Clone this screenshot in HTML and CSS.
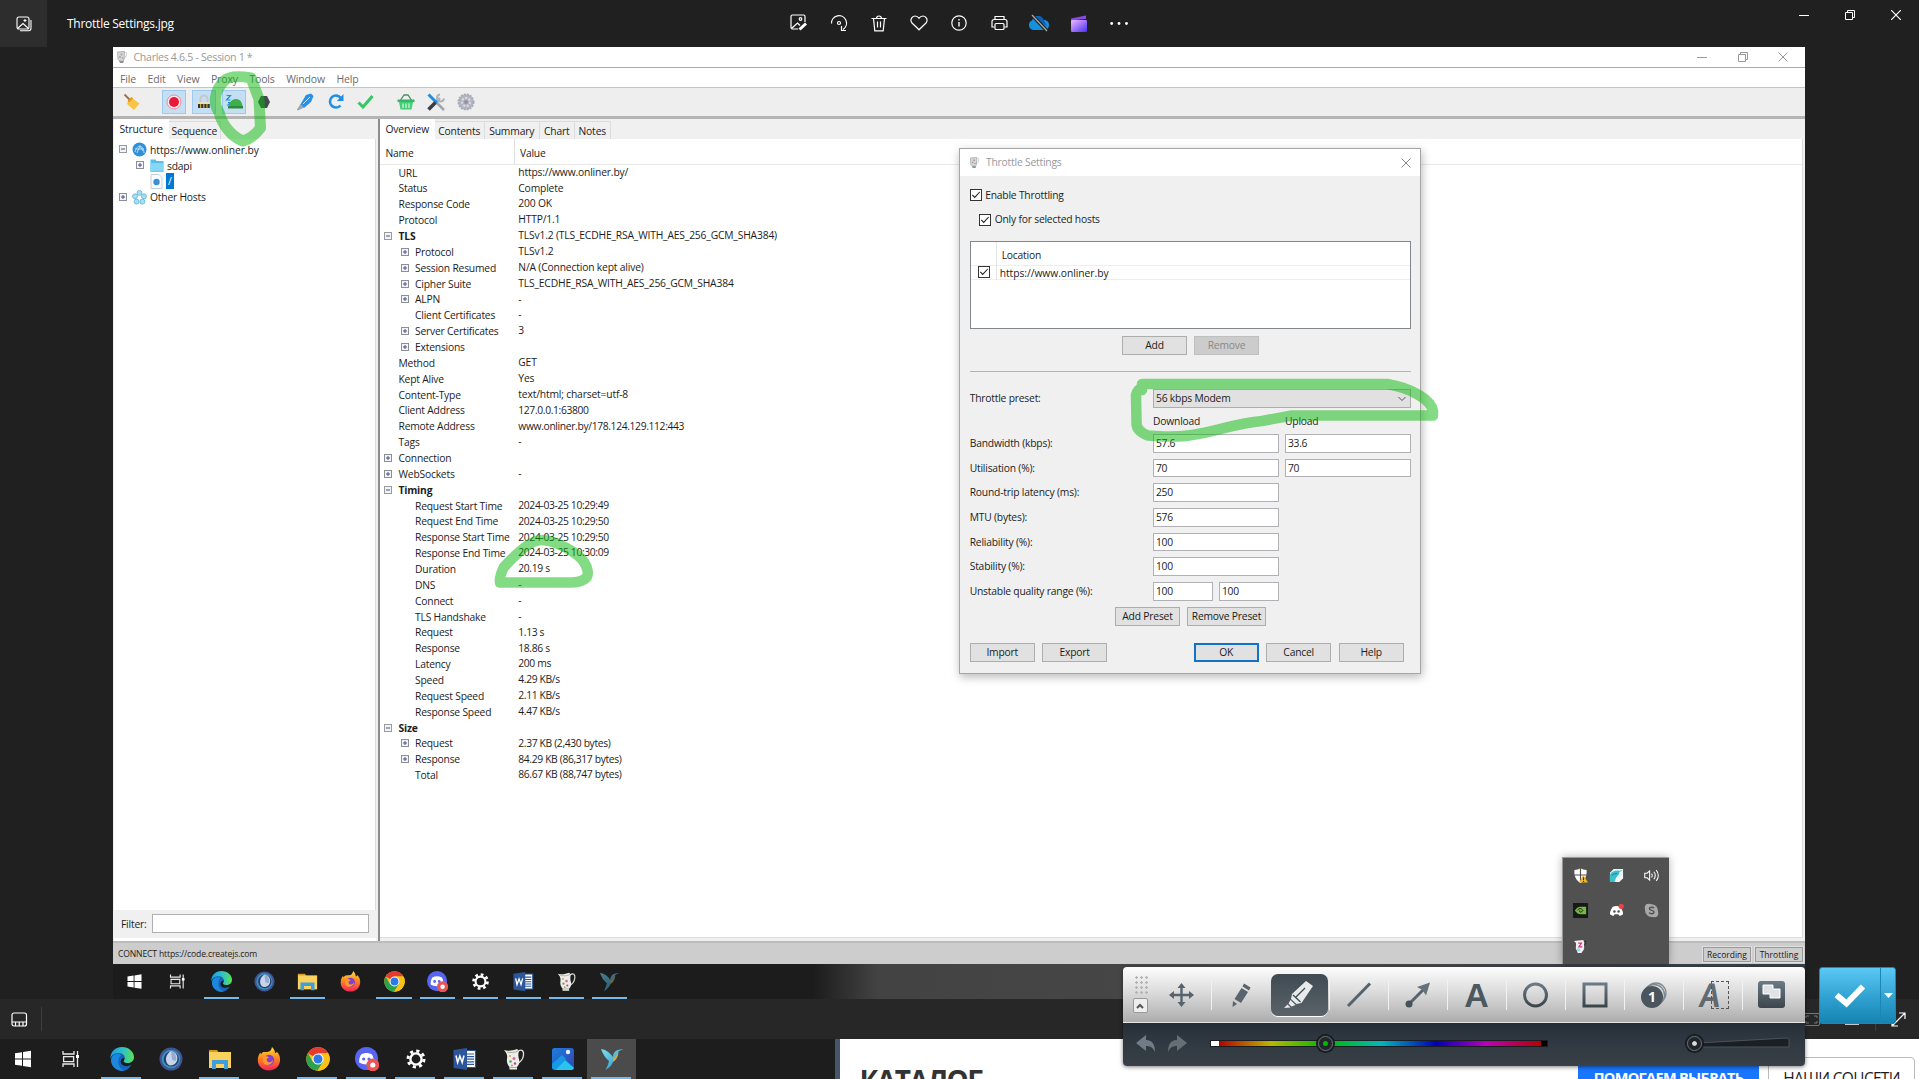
FILE: index.html
```html
<!DOCTYPE html>
<html lang="en">
<head>
<meta charset="utf-8">
<title>Throttle Settings.jpg</title>
<link rel="stylesheet" href="styles.css">
</head>
<body>
<svg class="defs" width="0" height="0" aria-hidden="true">
  <defs>
    <linearGradient id="gEdge" x1="0" y1="0" x2="1" y2="0"><stop offset="0" stop-color="#1b9de2"/><stop offset=".55" stop-color="#2fc2c8"/><stop offset="1" stop-color="#5fe04f"/></linearGradient>
    <linearGradient id="gFox" x1="0" y1="0" x2="0" y2="1"><stop offset="0" stop-color="#ffe03a"/><stop offset=".45" stop-color="#ff8a1e"/><stop offset="1" stop-color="#f5225a"/></linearGradient>
    <linearGradient id="gSteel" x1="0" y1="0" x2="0" y2="1"><stop offset="0" stop-color="#6b7a84"/><stop offset="1" stop-color="#3b454c"/></linearGradient>
    <linearGradient id="gClip" x1="0" y1="0" x2="1" y2="1"><stop offset="0" stop-color="#f0b8ff"/><stop offset="1" stop-color="#4a2ff0"/></linearGradient>
    <linearGradient id="gPhoto" x1="0" y1="0" x2="1" y2="1"><stop offset="0" stop-color="#1a7fe0"/><stop offset="1" stop-color="#3a3fa8"/></linearGradient>
    <linearGradient id="gBird" x1="0" y1="0" x2="1" y2="1"><stop offset="0" stop-color="#7fe3f0"/><stop offset="1" stop-color="#2388c8"/></linearGradient>
  </defs>
  <symbol id="plus" viewBox="0 0 8 8"><rect x=".5" y=".5" width="7" height="7" fill="#f4f4f4" stroke="#8e8e8e"/><path d="M2 4h4M4 2v4" stroke="#3a55a0"/></symbol>
  <symbol id="minus" viewBox="0 0 8 8"><rect x=".5" y=".5" width="7" height="7" fill="#f4f4f4" stroke="#9a9a9a"/><path d="M2 4h4" stroke="#3a55a0"/></symbol>
  <symbol id="check" viewBox="0 0 12 12"><rect x=".5" y=".5" width="11" height="11" fill="#fff" stroke="#333"/><path d="M2.3 5.8l2.4 2.6 5-5.4" fill="none" stroke="#222" stroke-width="1.1"/></symbol>
  <symbol id="win" viewBox="0 0 24 24"><path fill="#fff" d="M4 6.2l7-1v6.3H4zM12 5l8-1.200v7.700h-8zM4 12.500h7v6.300l-7-1zM12 12.500h8v7.700L12 19z"/></symbol>
  <symbol id="tview" viewBox="0 0 24 24"><path fill="none" stroke="#e8e8e8" stroke-width="1.300" d="M4 4v3h11V4M4 20v-3h11v3M4.600 9.600h10v5h-10zM18.500 4v16"/><path fill="#fff" d="M17 8h3v3h-3z"/></symbol>
  <symbol id="edge" viewBox="0 0 24 24"><path fill="#1465c0" d="M1 12c1-5 5-7 9-6 3 1 4 3 4 5-4 0-5 7 1 8 3 .5 5-.5 6.500-1.500C19 22 16 24 12 24 6 24 1 19 1 12z"/><path fill="url(#gEdge)" d="M.3 12C0 5 5 0 12 0c7 0 12 5 12 10 0 4-3 6-6.500 6-3 0-4.500-1-3.500-2.500C16 10 13 6 8.500 6 4.500 6 1 8.500.3 12z"/><path fill="#1d87dd" d="M8.500 13c-1 5 2 9 6 10.500-9 1.500-15-6-13-12.500C3 7 8 6 11 8c-1.500 1-2.300 3-2.500 5z"/></symbol>
  <symbol id="bird1" viewBox="0 0 24 24"><circle cx="12" cy="12" r="11.500" fill="#3f5590"/><circle cx="12" cy="12" r="9.300" fill="#3a8fc0"/><circle cx="12.300" cy="12" r="7.600" fill="#23406f"/><path fill="#c8d4ea" d="M12 4c5 1 7.500 5 6 10-1.500 4-6 5.500-9 3.500C5.500 14 6.500 7 12 4z"/><path fill="#96aad2" d="M12 4l1 9 4 1c1-5-1-9-5-10z"/></symbol>
  <symbol id="folder" viewBox="0 0 24 24"><path fill="#d99a1c" d="M1 3h8l2 3H1z"/><path fill="#fad15c" d="M1 5h22v16H1z"/><path fill="#3f9fdc" d="M4 13h16v9h-4v-5H8v5H4z"/></symbol>
  <symbol id="firefox" viewBox="0 0 24 24"><path fill="url(#gFox)" d="M15 0c2 2 3 4 3 6 1 0 1.500-.5 1.500-1.500 3 2.500 4 6 3.500 9.500-.8 6-5.500 9.500-11 9.500C5.500 23.500.8 19 .8 13c0-3 1-5.500 2.700-7.500l.5 2C5 5.500 6 5 7 5c2 0 5 0 6-1 1-1 1.500-2 2-4z"/><circle cx="12" cy="13" r="5.200" fill="#8340d0"/><path fill="#ff9a28" d="M6 10c2-2 5-1 6 1-2 0-3 1-2 3s4 2 6-1c0 5-8 7-10 2z"/></symbol>
  <symbol id="chrome" viewBox="0 0 24 24"><circle cx="12" cy="12" r="11.700" fill="#fbc116"/><path fill="#e33b2e" d="M12 12L1.900 6.200A11.700 11.700 0 0 1 22.200 6.200H12z"/><path fill="#2ba24c" d="M12 12l-1.500 11.600A11.700 11.700 0 0 1 1.900 6.200L7 15z"/><path fill="#2ba24c" d="M7 15l10 0-5.500 8.700z"/><path fill="#fbc116" d="M12 6.200h10.200a11.700 11.700 0 0 1-10.700 17.500L17 15z"/><circle cx="12" cy="12" r="5.600" fill="#fff"/><circle cx="12" cy="12" r="4.500" fill="#2f78e8"/></symbol>
  <symbol id="discord" viewBox="0 0 24 24"><circle cx="11.500" cy="11.500" r="11.500" fill="#5865f2"/><path fill="#fff" d="M6 7.500c4-2 7-2 11 0 1.500 3 2 5 1.800 8-4 2.500-10.500 2.500-14.600 0C4 12.500 4.500 10 6 7.500z"/><circle cx="8.700" cy="12" r="1.600" fill="#5865f2"/><circle cx="14" cy="12" r="1.600" fill="#5865f2"/><circle cx="17.800" cy="18" r="6.400" fill="#ea5455"/><circle cx="17.800" cy="18" r="2.600" fill="#fff"/></symbol>
  <symbol id="gear" viewBox="0 0 24 24"><circle cx="12" cy="12" r="5.600" fill="none" stroke="#fff" stroke-width="2.400"/><circle cx="12" cy="12" r="8" fill="none" stroke="#fff" stroke-width="3" stroke-dasharray="3.140 3.140"/></symbol>
  <symbol id="word" viewBox="0 0 24 24"><path fill="#fff" stroke="#2b579a" stroke-width="1.200" d="M12 3.500h10.500v17H12z"/><path stroke="#2b579a" stroke-width="1.200" d="M13 7h8M13 9.600h8M13 12.200h8M13 14.800h8M13 17.400h8"/><path fill="#2b579a" d="M.5 3L14 1v22L.5 21z"/><path fill="none" stroke="#fff" stroke-width="1.500" d="M3 8.500l1.600 7L6.900 9l2.300 6.500 1.800-7"/></symbol>
  <symbol id="jug" viewBox="0 0 24 24"><path fill="none" stroke="#d8dcd4" stroke-width="1.400" d="M16 4.500c4-3 6-.5 5.500 3.500-.5 4-3 7-6 8.500"/><path fill="#eceee8" d="M2 3c4 1.500 9 .5 13-1l2 2c-1 3-.8 6 .2 9 .8 3-.7 5.500-2.200 7v2.500H7.500V20C5.500 18 4.500 15 5 12c.4-3 .5-5-3-9z"/><path stroke="#a8ada4" d="M5 5c4 1 8 .5 11-1M7.500 20.500H15" fill="none"/><circle cx="8" cy="9" r="1" fill="#c8a040"/><circle cx="12" cy="11.500" r="1.500" fill="#e06aa0"/><circle cx="8.500" cy="14.500" r="1.300" fill="#4aa870"/><circle cx="13" cy="16.500" r="1.200" fill="#b04aa0"/><circle cx="10" cy="18.500" r="1" fill="#e09040"/></symbol>
  <symbol id="jugsmall" viewBox="0 0 12 14"><path fill="none" stroke="#c4c8c8" d="M8 3.500c2-2 3-1 2.500 1S9 8 8 8.500"/><path fill="#d4d8d8" stroke="#a4a8a8" stroke-width=".8" d="M1.500 2l7-.5L8 10l-1 1H3.500L2 9.500z"/><path fill="#8e9292" d="M3 11h5l-1 2H4z"/><circle cx="5.500" cy="4.500" r="1" fill="#d88a94"/><circle cx="4" cy="7" r=".9" fill="#80b09a"/><circle cx="6.500" cy="8" r=".8" fill="#c08a9c"/></symbol>
  <symbol id="photos" viewBox="0 0 24 24"><rect x="1" y="1" width="22" height="22" rx="2.500" fill="url(#gPhoto)"/><path fill="#1767c0" d="M1 18L11 8l12 12v2l-2 1H3l-2-2z"/><path fill="#27c4f0" d="M4 23l10-10 9 8-2 2z"/><path fill="#169ae8" d="M1 17l10-9 4 4L4 23l-3-2z"/><circle cx="17" cy="5" r="2.200" fill="#e8f0ff"/></symbol>
  <symbol id="hummer" viewBox="0 0 24 24"><path fill="url(#gBird)" d="M1 2c6 1 9 4 12 8 0-4 2-6 4.500-7l6-1-5 2.500c0 5-2.500 8-5.500 10.500-1 3-4 6-7.500 8 2-4 3-6 3.500-9C5 11 3 7 1 2z"/><path fill="#e0a83a" d="M12.500 12c3-1.500 4-4 5-7 1 4-1 7.500-4 9.500z"/></symbol>
</svg>

<header class="viewer-top">
  <div class="app-tile"><svg width="16" height="16" viewBox="0 0 16 16" fill="none" stroke="#fff" stroke-width="1.100"><rect x="1" y="1" width="12" height="12" rx="2"/><path d="M2 12l5-4.500L12 12M4 14.800h8.500a2.500 2.500 0 0 0 2.500-2.500V4M9 3v3M7.500 4.500h3"/></svg></div>
  <div class="file-name">Throttle Settings.jpg</div>
  <nav class="viewer-tools">
    <span><svg width="18" height="18" viewBox="0 0 18 18" fill="none" stroke="#fff" stroke-width="1.200"><path d="M8 15H2.500A1.500 1.500 0 0 1 1 13.500v-11A1.500 1.500 0 0 1 2.500 1h11A1.500 1.500 0 0 1 15 2.500V8M2 14l5.500-5L10 11.500"/><circle cx="10.500" cy="5" r="1.300"/><path d="M9.500 15.500L16 9.500" stroke-width="3"/></svg></span>
    <span><svg width="18" height="18" viewBox="0 0 18 18" fill="none" stroke="#fff" stroke-width="1.200"><path d="M1.500 9.500A7.500 7.500 0 1 1 13 15.500M11.500 12v4.500H16"/><circle cx="9" cy="9" r="1.500"/></svg></span>
    <span><svg width="16" height="17" viewBox="0 0 16 17" fill="none" stroke="#fff" stroke-width="1.200"><path d="M.5 3.500h15M5.500 3.500a2.500 2.500 0 0 1 5 0M2.500 3.500l1.300 12.400h8.400L13.500 3.500M6.500 6.500v6M9.500 6.500v6"/></svg></span>
    <span><svg width="18" height="16" viewBox="0 0 18 16" fill="none" stroke="#fff" stroke-width="1.200"><path d="M9 14.800L2 8C-.5 5 2 1 5 1c2 0 3.200 1 4 2.300C9.800 2 11 1 13 1c3 0 5.500 4 3 7z"/></svg></span>
    <span><svg width="16" height="16" viewBox="0 0 16 16" fill="none" stroke="#fff" stroke-width="1.200"><circle cx="8" cy="8" r="7.200"/><path d="M8 7v4.500M8 4v1.500" stroke-width="1.400"/></svg></span>
    <span><svg width="17" height="16" viewBox="0 0 17 16" fill="none" stroke="#fff" stroke-width="1.200"><path d="M4 4V1.500h9V4M3.500 12H1V6.500A2 2 0 0 1 3 4.500h11a2 2 0 0 1 2 2V12h-2.500"/><rect x="4" y="8.500" width="9" height="6" rx="1"/></svg></span>
    <span><svg width="22" height="18" viewBox="0 0 22 18"><path fill="#1590df" d="M5 16a5 5 0 0 1-1-9.500C6 1 13 .5 15 6c4-.5 6 2 6 5s-2 5-4 5z"/><path fill="#0f5fb4" d="M8 3c3-2 6-1 7.500 2.500L19 12 6 6z"/><path d="M4 1l15 16" stroke="#202020" stroke-width="3.500"/><path d="M4 1l15 16" stroke="#aaa" stroke-width="1.300"/></svg></span>
    <span><svg width="16" height="17" viewBox="0 0 16 17"><rect y="5" width="16" height="12" rx="1" fill="url(#gClip)"/><path fill="#8a4be0" d="M0 5V3.500L15 .5V4L4 5z"/></svg></span>
    <span><svg width="18" height="4" viewBox="0 0 18 4" fill="#fff"><circle cx="1.700" cy="2.500" r="1.400"/><circle cx="9" cy="2.500" r="1.400"/><circle cx="16.500" cy="2.500" r="1.400"/></svg></span>
  </nav>
  <div class="win-ctl">
    <span><svg width="10" height="10" stroke="#fff"><path d="M0 5.500h10"/></svg></span>
    <span><svg width="10" height="10" fill="none" stroke="#fff"><path d="M.5 2.500h7v7h-7zM2.500 2.500v-2h7v7h-2"/></svg></span>
    <span><svg width="10" height="10" stroke="#fff" stroke-width="1.200"><path d="M0 0l10 10M10 0L0 10"/></svg></span>
  </div>
</header>

<main class="stage">
  <section class="shot">
    <div class="titlebar">
      <svg width="12" height="14"><use href="#jugsmall"/></svg>
      <span class="title">Charles 4.6.5 - Session 1 *</span>
      <div class="ctl">
        <svg width="10" height="10" stroke="#999"><path d="M0 5.500h10"/></svg>
        <svg width="10" height="10" fill="none" stroke="#999"><path d="M.5 2.500h7v7h-7zM2.500 2.500v-2h7v7h-2"/></svg>
        <svg width="10" height="10" stroke="#999"><path d="M.5.5l9 9M9.500.5l-9 9"/></svg>
      </div>
    </div>
    <div class="menubar"><span>File</span><span>Edit</span><span>View</span><span>Proxy</span><span>Tools</span><span>Window</span><span>Help</span></div>
    <div class="toolbar">
      <span class="tb"><svg width="18" height="18" viewBox="0 0 18 18"><path d="M1.500 1.500l5 5" stroke="#a0703c" stroke-width="1.800"/><path fill="#f8c445" d="M5 8l3.500-3.500 8 6L11 17 4 11z"/><path fill="#e0971e" d="M4.500 8L8.500 4l1.500 1.200L6 9.500z"/></svg></span>
      <span class="tb on first"><svg width="16" height="16" viewBox="0 0 16 16"><circle cx="8" cy="8" r="7" fill="#fbe8ea" stroke="#ea8c98"/><circle cx="8" cy="8" r="5" fill="#e8173c"/></svg></span>
      <span class="tb on"><svg width="14" height="16" viewBox="0 0 14 16"><path d="M3.500 9V5a3.500 3.500 0 0 1 7 0v4" fill="none" stroke="#c4c8d0" stroke-width="2"/><path fill="#e8dfc0" d="M1 8h12v2H1z"/><path fill="#caa93a" d="M1 10h12v4H1z"/><path d="M1 12h12" stroke="#333" stroke-width="4" stroke-dasharray="2 1.200"/></svg></span>
      <span class="tb on"><svg width="18" height="16" viewBox="0 0 18 16"><path d="M1.500 1.500h4l-4 4.500h4M3 8.500h2.500L3 11h3" fill="none" stroke="#1b8fe0" stroke-width="1.200"/><path fill="#3fae4d" d="M4 13c0-5 3-8 7-8s6 3 6.500 7z"/><path fill="#2b8a3b" d="M3 12h15v2.500H3z"/></svg></span>
      <span class="tb"><svg width="14" height="14" viewBox="0 0 14 14"><path fill="#454a50" d="M4 1h6l3 6-3 6H4L1 7z"/></svg></span>
      <span class="tb gap1"><svg width="18" height="18" viewBox="0 0 18 18"><path fill="#2492ea" d="M10 2l5-1.500L17.500 3 15 9l-7 6-4-3z"/><path stroke="#cfe4f6" d="M7 11l7-7"/><path fill="#9aa6b4" d="M4.500 11L8 14.500 2 17.500l-1.200-.8z"/></svg></span>
      <span class="tb"><svg width="17" height="17" viewBox="0 0 17 17"><path d="M13.500 12.500a6 6 0 1 1 .3-7.500" fill="none" stroke="#1e90e6" stroke-width="2.600"/><path fill="#1e90e6" d="M16.500 1v7H9.800z"/></svg></span>
      <span class="tb"><svg width="17" height="15" viewBox="0 0 17 15"><path d="M1.500 8.500l4.500 4.500L15.500 2" fill="none" stroke="#35c766" stroke-width="3"/></svg></span>
      <span class="tb gap2"><svg width="18" height="17" viewBox="0 0 18 17"><path d="M3 8l4-6h4l4 6" fill="none" stroke="#4b8f60" stroke-width="1.300"/><path fill="#35b863" d="M.5 6.500h17V9h-17z"/><path fill="#46cf78" d="M2 9h14l-1.500 7.500h-11z"/><path stroke="#f0fff5" d="M6 10.500v4.500M9 10.500v4.500M12 10.500v4.500"/></svg></span>
      <span class="tb"><svg width="18" height="18" viewBox="0 0 18 18"><path d="M9 8.500L13 5" stroke="#b0b4ba" stroke-width="2.500"/><path d="M13 1.500a3.500 3.500 0 1 0 4 4" fill="none" stroke="#b0b4ba" stroke-width="2"/><path d="M10 10l7 7" stroke="#a0a5ac" stroke-width="2.500"/><path d="M1.500 1.500L10 10" stroke="#1e8ee0" stroke-width="3"/><path d="M8.500 9.500L1.500 16.500" stroke="#3a3f45" stroke-width="3.500"/></svg></span>
      <span class="tb"><svg width="18" height="18" viewBox="0 0 18 18"><circle cx="9" cy="9" r="7.500" fill="#b3b6c0" stroke="#a9acb8" stroke-width="2" stroke-dasharray="2 1"/><circle cx="9" cy="9" r="4" fill="none" stroke="#d8dae0" stroke-dasharray="2 1.500" stroke-width="2"/><circle cx="9" cy="9" r="2" fill="#8e93a0"/></svg></span>
    </div>
    <div class="panes">
      <div class="left">
        <div class="tabs"><span class="tab sel">Structure</span><span class="tab">Sequence</span></div>
        <div class="tree">
          <div class="node"><svg class="ex"><use href="#minus"/></svg><svg width="15" height="15" viewBox="0 0 15 15"><circle cx="7.500" cy="7.500" r="7" fill="#2f8fd8"/><path d="M3 10c1-4 3-6 5-6s4 4 4 7M3 7h9M5 11l3-7 3 5" fill="none" stroke="#b8def8"/></svg><b class="url">https://www.onliner.by</b></div>
          <div class="node in"><svg class="ex"><use href="#plus"/></svg><svg width="14" height="13" viewBox="0 0 14 13"><path fill="#54bfea" d="M.5.5h5l1 1.500h7v11H.5z"/><path fill="#85d6f7" d="M.5 4h13v8.500H.5z"/></svg><b>sdapi</b></div>
          <div class="node in"><i class="ex"></i><svg width="13" height="15" viewBox="0 0 13 15"><path fill="#fbfcff" stroke="#c6d0da" d="M1 .5h8l3 3v11H1z"/><circle cx="6.500" cy="8" r="3.200" fill="#3a92d6"/></svg><b class="pick">/</b></div>
          <div class="node"><svg class="ex"><use href="#plus"/></svg><svg width="15" height="15" viewBox="0 0 15 15" fill="#a6def2" stroke="#5fb4d4" stroke-width=".8"><circle cx="7.500" cy="2.900" r="2.500"/><circle cx="12" cy="6.300" r="2.500"/><circle cx="10.400" cy="11.600" r="2.500"/><circle cx="4.600" cy="11.600" r="2.500"/><circle cx="3" cy="6.300" r="2.500"/></svg><b>Other Hosts</b></div>
        </div>
        <div class="filter"><span>Filter:</span><div class="field"></div></div>
      </div>
      <div class="right">
        <div class="tabs"><span class="tab sel">Overview</span><span class="tab">Contents</span><span class="tab">Summary</span><span class="tab">Chart</span><span class="tab">Notes</span></div>
        <div class="table">
          <div class="thead"><span>Name</span><span>Value</span></div>
          <div class="r"><span>URL</span><span>https://www.onliner.by/</span></div>
          <div class="r"><span>Status</span><span>Complete</span></div>
          <div class="r"><span>Response Code</span><span>200 OK</span></div>
          <div class="r"><span>Protocol</span><span>HTTP/1.1</span></div>
          <div class="r g"><svg class="ex"><use href="#minus"/></svg><span>TLS</span><span>TLSv1.2 (TLS_ECDHE_RSA_WITH_AES_256_GCM_SHA384)</span></div>
          <div class="r s"><svg class="ex"><use href="#plus"/></svg><span>Protocol</span><span>TLSv1.2</span></div>
          <div class="r s"><svg class="ex"><use href="#plus"/></svg><span>Session Resumed</span><span>N/A (Connection kept alive)</span></div>
          <div class="r s"><svg class="ex"><use href="#plus"/></svg><span>Cipher Suite</span><span>TLS_ECDHE_RSA_WITH_AES_256_GCM_SHA384</span></div>
          <div class="r s"><svg class="ex"><use href="#plus"/></svg><span>ALPN</span><span>-</span></div>
          <div class="r s"><span>Client Certificates</span><span>-</span></div>
          <div class="r s"><svg class="ex"><use href="#plus"/></svg><span>Server Certificates</span><span>3</span></div>
          <div class="r s"><svg class="ex"><use href="#plus"/></svg><span>Extensions</span><span></span></div>
          <div class="r"><span>Method</span><span>GET</span></div>
          <div class="r"><span>Kept Alive</span><span>Yes</span></div>
          <div class="r"><span>Content-Type</span><span>text/html; charset=utf-8</span></div>
          <div class="r n"><span>Client Address</span><span>127.0.0.1:63800</span></div>
          <div class="r n"><span>Remote Address</span><span>www.onliner.by/178.124.129.112:443</span></div>
          <div class="r"><span>Tags</span><span>-</span></div>
          <div class="r"><svg class="ex"><use href="#plus"/></svg><span>Connection</span><span></span></div>
          <div class="r"><svg class="ex"><use href="#plus"/></svg><span>WebSockets</span><span>-</span></div>
          <div class="r g"><svg class="ex"><use href="#minus"/></svg><span>Timing</span><span></span></div>
          <div class="r s n"><span>Request Start Time</span><span>2024-03-25 10:29:49</span></div>
          <div class="r s n"><span>Request End Time</span><span>2024-03-25 10:29:50</span></div>
          <div class="r s n"><span>Response Start Time</span><span>2024-03-25 10:29:50</span></div>
          <div class="r s n"><span>Response End Time</span><span>2024-03-25 10:30:09</span></div>
          <div class="r s n"><span>Duration</span><span>20.19 s</span></div>
          <div class="r s"><span>DNS</span><span>-</span></div>
          <div class="r s"><span>Connect</span><span>-</span></div>
          <div class="r s"><span>TLS Handshake</span><span>-</span></div>
          <div class="r s n"><span>Request</span><span>1.13 s</span></div>
          <div class="r s n"><span>Response</span><span>18.86 s</span></div>
          <div class="r s n"><span>Latency</span><span>200 ms</span></div>
          <div class="r s n"><span>Speed</span><span>4.29 KB/s</span></div>
          <div class="r s n"><span>Request Speed</span><span>2.11 KB/s</span></div>
          <div class="r s n"><span>Response Speed</span><span>4.47 KB/s</span></div>
          <div class="r g"><svg class="ex"><use href="#minus"/></svg><span>Size</span><span></span></div>
          <div class="r s n"><svg class="ex"><use href="#plus"/></svg><span>Request</span><span>2.37 KB (2,430 bytes)</span></div>
          <div class="r s n"><svg class="ex"><use href="#plus"/></svg><span>Response</span><span>84.29 KB (86,317 bytes)</span></div>
          <div class="r s n"><span>Total</span><span>86.67 KB (88,747 bytes)</span></div>
        </div>
      </div>
    </div>
    <div class="status"><span class="msg">CONNECT https://code.createjs.com</span><span class="badge">Recording</span><span class="badge">Throttling</span></div>
    <div class="taskbar inner">
      <span><svg><use href="#win"/></svg></span><span class="tv"><svg><use href="#tview"/></svg></span>
      <span class="run"><svg><use href="#edge"/></svg></span><span><svg><use href="#bird1"/></svg></span><span class="run"><svg><use href="#folder"/></svg></span><span><svg><use href="#firefox"/></svg></span><span class="run"><svg><use href="#chrome"/></svg></span><span class="run"><svg><use href="#discord"/></svg></span><span class="run"><svg><use href="#gear"/></svg></span><span class="run"><svg><use href="#word"/></svg></span><span class="run"><svg><use href="#jug"/></svg></span><span class="run faded"><svg><use href="#hummer"/></svg></span>
    </div>
  </section>

  <section class="dialog">
    <div class="d-title"><svg width="11" height="13"><use href="#jugsmall"/></svg><span>Throttle Settings</span><svg width="10" height="10" stroke="#888"><path d="M.5.5l9 9M9.500.5l-9 9"/></svg></div>
    <div class="d-body">
      <div class="chk"><svg><use href="#check"/></svg>Enable Throttling</div>
      <div class="chk sub"><svg><use href="#check"/></svg>Only for selected hosts</div>
      <div class="hosts">
        <div class="h-row head"><span></span><span>Location</span></div>
        <div class="h-row"><span><svg><use href="#check"/></svg></span><span class="url">https://www.onliner.by</span></div>
      </div>
      <div class="btns add"><span class="btn">Add</span><span class="btn off">Remove</span></div>
      <div class="rule"></div>
      <div class="form">
        <label>Throttle preset:</label><div class="select">56 kbps Modem<svg width="8" height="6" fill="none" stroke="#555"><path d="M.5 1l3.500 3.500L7.500 1"/></svg></div>
        <label class="cap"></label><span class="cap">Download</span><span class="cap">Upload</span>
        <label>Bandwidth (kbps):</label><span class="inp">57.6</span><span class="inp">33.6</span>
        <label>Utilisation (%):</label><span class="inp">70</span><span class="inp">70</span>
        <label>Round-trip latency (ms):</label><span class="inp">250</span><i></i>
        <label>MTU (bytes):</label><span class="inp">576</span><i></i>
        <label>Reliability (%):</label><span class="inp">100</span><i></i>
        <label>Stability (%):</label><span class="inp">100</span><i></i>
        <label>Unstable quality range (%):</label><div class="pair"><span class="inp">100</span><span class="inp">100</span></div><i></i>
      </div>
      <div class="btns preset"><span class="btn">Add Preset</span><span class="btn wide">Remove Preset</span></div>
      <div class="btns foot"><span class="btn">Import</span><span class="btn">Export</span><span class="btn ok">OK</span><span class="btn">Cancel</span><span class="btn">Help</span></div>
    </div>
  </section>

  <section class="tray">
    <svg viewBox="0 0 16 16"><path fill="#fff" d="M8 0c2 1.500 4 2 6.500 2 .5 7-2 11-6.500 14C3.500 13 1 9 1.500 2 4 2 6 1.500 8 0z"/><path d="M8 0v15M1.500 7.500h13" stroke="#505050" stroke-width="1.200"/><path fill="#f0b422" d="M11 7.500l5 8H6.500z"/><path d="M11.200 10v3M11.200 13.800v1" stroke="#222"/></svg>
    <svg viewBox="0 0 16 16"><path fill="#eef6f6" d="M5 1h10v10l-4 4H1V5z"/><path fill="#3cc0cc" d="M1 7c2-4 7-5 10-4l4-1-4 2.500C11 8 7 9 6 15H1z"/><path d="M3 8c2-2 4-2 6-2" stroke="#157a88" fill="none"/></svg>
    <svg viewBox="0 0 16 16" fill="none" stroke="#fff" stroke-width="1.100"><path d="M.8 5.500h2.500L6 3v10L3.300 10.500H.8zM8 6c1 1 1 3 0 4M10.500 4c2 2.200 2 5.800 0 8M13 2.200c3 3.300 3 8.300 0 11.600"/></svg>
    <svg viewBox="0 0 16 16"><path fill="#161a14" d="M0 0h16v16H0z"/><path fill="#76b947" d="M2 8c2-3 4-4 6-4h6v8H8c-2 0-4-1-6-4z"/><path d="M4.500 8c3-3.500 5-2 6 0-2 3-4 1.500-3.500 0" fill="none" stroke="#161a14"/></svg>
    <svg viewBox="0 0 16 16"><path fill="#fff" d="M4 4c3-1 5-1 8 0 2 3 3 5 3 8-2 1.500-3 1.500-4 1.500l-1-1.500H6l-1 1.500c-1 0-2 0-4-1.500 0-3 1-5 3-8z"/><circle cx="5.800" cy="9" r="1.300" fill="#505050"/><circle cx="10.200" cy="9" r="1.300" fill="#505050"/><circle cx="13" cy="3.500" r="2.800" fill="#ed4245"/></svg>
    <svg viewBox="0 0 16 16"><circle cx="8" cy="8" r="6.800" fill="#a9a9a9"/><circle cx="5" cy="5" r="4.200" fill="#a9a9a9"/><circle cx="11" cy="11" r="4.200" fill="#a9a9a9"/><path d="M10.700 5.500C9.500 4 5.700 4.200 5.700 6.200c0 2.200 5 1.200 5 3.500 0 2.200-4 2.300-5.300.6" fill="none" stroke="#505050" stroke-width="1.500"/></svg>
    <svg viewBox="0 0 16 16"><path fill="#f5f0f2" d="M1 2l10-1 1 3c-1 3 1 6-1 8l-2 3H5l-1-3C2 10 4 7 3 4z"/><path d="M5.500 4.500h3.500L6.200 8.500H10" fill="none" stroke="#d03878" stroke-width="1.300"/><path fill="#8cd8f0" d="M4 10h3l1 3H5z"/><path d="M12 2.500h2L12.500 7" fill="none" stroke="#333"/></svg>
  </section>

  <svg class="ink" width="1919" height="952" viewBox="0 47 1919 952" fill="none" stroke="#08b808" stroke-opacity=".5" stroke-linejoin="round" stroke-linecap="round">
    <path stroke-width="11" d="M224 81C229 76 240 76 251 78L259 99L260.500 128C256 134 250 139 243 141C232 137 222 125 219 112C213 104 214 91 224 81z"/>
    <path stroke-width="10.500" d="M500 582.500C499 577 502 571 504 567C515 555 530 540 541 540C556 540 578 553 584 562C588 568 589 575 586 578C582 582 576 582.500 570 582.500z"/>
    <path stroke-width="10.500" d="M1142 390V384H1387C1412 388 1431 400 1433 411V415.500H1292L1262 421C1236 423 1215 432 1192 435C1175 438 1160 436 1148 435.500C1141 433 1136 429 1136.500 422L1136 395C1137 391 1139 389 1142 388"/>
  </svg>
</main>

<footer class="viewer-bottom">
  <svg width="17" height="15" viewBox="0 0 17 15" fill="none" stroke="#fff" stroke-width="1.200"><rect x="1" y="1" width="14.500" height="13" rx="2"/><path d="M1 10h14.500M4.500 10v4M8.200 10v4M12 10v4"/></svg><i class="vbar"></i>
  <div class="zoomers"><svg width="17" height="13" viewBox="0 0 17 13" fill="none" stroke="#777"><rect x=".5" y=".5" width="16" height="12" rx="1.500"/><path d="M3 5V3h3M11 3h3v2M3 8v2h3M11 10h3V8"/></svg><svg width="16" height="12"><path d="M1 11h14" stroke="#fff" stroke-width="1.500"/></svg><i class="vbar"></i><svg width="15" height="15" fill="none" stroke="#fff" stroke-width="1.200"><path d="M1 14L14 1M8 1h6v6M1 8v6h6"/></svg></div>
</footer>

<div class="bottom">
  <div class="taskbar outer">
    <span><svg><use href="#win"/></svg></span><span class="tv"><svg><use href="#tview"/></svg></span>
    <span class="run"><svg><use href="#edge"/></svg></span><span><svg><use href="#bird1"/></svg></span><span class="run"><svg><use href="#folder"/></svg></span><span><svg><use href="#firefox"/></svg></span><span class="run"><svg><use href="#chrome"/></svg></span><span class="run"><svg><use href="#discord"/></svg></span><span class="run"><svg><use href="#gear"/></svg></span><span class="run"><svg><use href="#word"/></svg></span><span class="run"><svg><use href="#jug"/></svg></span><span class="run"><svg><use href="#photos"/></svg></span><span class="run active"><svg><use href="#hummer"/></svg></span>
  </div>
  <div class="site"><span class="catalog">КАТАЛОГ</span><span class="help">ПОМОГАЕМ ВЫБРАТЬ</span><span class="social">НАШИ СОЦСЕТИ</span></div>
</div>

<section class="editor">
  <div class="e-top">
    <div class="e-grip"><i class="dots"></i><i class="fold"><svg width="8" height="6" fill="none" stroke="#555" stroke-width="2"><path d="M1 5l3-3 3 3"/></svg></i></div>
    <span class="first"><svg width="26" height="26" viewBox="0 0 26 26"><path d="M12.500 4v18M4 13h18" stroke="#56636c" stroke-width="2.400"/><path fill="#56636c" d="M12.500 1l4 5h-8zM12.500 25l4-5h-8zM0 13l5-4v8zM25 13l-5-4v8z"/></svg></span>
    <span><svg width="20" height="26" viewBox="0 0 20 26"><path fill="#58656e" d="M13 1.500l6.500 4-1.500 3-6.500-4zM10.500 6l6.500 4-7 11-6.500-4zM2 19l4 3-4.500 3z"/></svg></span>
    <span class="cur"><svg width="32" height="30" viewBox="0 0 32 30"><path fill="#e8eaeb" d="M23 1l7 5-11.500 17-5 1-5.500-5 1-5zM7.500 20l5 5-4 1.500-3-3zM4.500 24.500l3 3L1 28z"/><path d="M22 8l-9 9M10 15l7.500 7" stroke="#454e54" stroke-width="1.400"/></svg></span>
    <span><svg width="26" height="26"><path d="M2 24L24 1.500" stroke="#56636c" stroke-width="3"/></svg></span>
    <span><svg width="26" height="26"><path d="M4 22L18 8" stroke="#56636c" stroke-width="3"/><circle cx="4" cy="22" r="3.500" fill="#46525a"/><path fill="#62717a" d="M25 .5l-4 13-3.500-5.500L12 5z"/></svg></span>
    <span><b class="glyph">A</b></span>
    <span><svg width="26" height="26" fill="none" stroke="url(#gSteel)" stroke-width="3"><circle cx="12.500" cy="13" r="11"/></svg></span>
    <span><svg width="26" height="26" fill="none" stroke="url(#gSteel)" stroke-width="3"><rect x="2" y="2" width="22" height="22"/></svg></span>
    <span><svg width="26" height="26" viewBox="0 0 26 26"><g fill="none" stroke="#7d8890" stroke-width="1.300"><circle cx="15" cy="11" r="10"/><circle cx="13" cy="13" r="10.500"/></g><circle cx="11" cy="15" r="11" fill="#4a555d"/><text x="7" y="20" fill="#fff" class="num">1</text></svg></span>
    <span><b class="glyph blur">A</b><i class="marquee"></i></span>
    <span class="last"><svg width="28" height="28" viewBox="0 0 28 28"><rect width="27" height="27" rx="3" fill="url(#gSteel)"/><path fill="#dfe3e5" stroke="#fff" d="M5 4h10v4h7v9H12v-4H5z"/></svg></span>
  </div>
  <div class="e-bot">
    <svg width="20" height="18" viewBox="0 0 20 18" fill="#727c84"><path d="M10 0v5c6 0 9 4 9 12-2-4-4-6-9-6v5L0 8z"/></svg>
    <svg width="20" height="18" viewBox="0 0 20 18" fill="#666f76" class="redo"><path d="M10 0v5C4 5 1 9 1 17c2-4 4-6 9-6v5l10-8z"/></svg>
    <div class="hue"><i class="knob"></i></div>
    <div class="size"><svg width="95" height="14"><path fill="#1b1f24" stroke="#4a525a" d="M3 6L92 1q2 0 2 2v7H3z"/></svg><i class="knob w"></i></div>
  </div>
</section>

<div class="done"><span class="ok"><svg width="32" height="24" viewBox="0 0 32 24"><path d="M2.500 11l10 8.500L29 2.500" fill="none" stroke="#fff" stroke-width="6"/></svg></span><span class="more"><svg width="9" height="5" fill="#fff"><path d="M0 0h9L4.500 5z"/></svg></span></div>
</body>
</html>
```

FILE: styles.css
```css
* { box-sizing: border-box; }
body {
  margin: 0;
  width: 1919px;
  height: 1079px;
  overflow: hidden;
  position: relative;
  display: grid;
  grid-template-rows: 47px 952px 40px 40px;
  background: #202020;
  font-family: "Open Sans", "Noto Sans", sans-serif;
  font-size: 10.3px;
  letter-spacing: -0.2px;
  line-height: 1;
  color: #1c1c1c;
  white-space: nowrap;
}
.defs { position: absolute; }
svg { display: block; flex: none; }
i { font-style: normal; }
.url { letter-spacing: -0.050px; }

/* viewer header */
.viewer-top { display: flex; background: #202020; color: #fff; }
.app-tile { width: 47px; display: grid; place-items: center; background: #2d2d2d; }
.file-name { width: 732px; padding-left: 20px; line-height: 48px; font-size: 12px; letter-spacing: -0.25px; }
.viewer-tools { display: flex; }
.viewer-tools span { width: 40px; height: 46px; display: grid; place-items: center; }
.win-ctl { display: flex; margin-left: auto; }
.win-ctl span { width: 46px; height: 30px; display: grid; place-items: center; }

/* image area */
.stage { position: relative; padding-left: 113px; background: #202020; }
.shot { width: 1692px; height: 952px; display: flex; flex-direction: column; background: #f0f0f0; }
.titlebar { height: 20px; display: flex; align-items: center; padding: 0 17px 0 3px; background: #fff; color: #999; }
.titlebar .title { margin: 1px 0 0 5.500px; font-size: 10.6px; letter-spacing: -0.310px; }
.ctl { margin-left: auto; display: flex; gap: 30.500px; margin-bottom: 1px; }
.menubar { height: 20px; display: flex; gap: 11.500px; align-items: center; padding: 3px 0 0 7px; background: #fff; border-top: 1px solid #acacac; color: #6c6c6c; font-size: 10.500px; letter-spacing: -0.150px; }
.toolbar { height: 32px; display: flex; align-items: center; padding: 0 0 1px 7px; background: #eee; border-top: 1px solid #c4c4c4; border-bottom: 3px solid #b4b4b4; }
.tb { width: 24px; height: 24px; margin-right: 6px; display: grid; place-items: center; border: 1px solid transparent; }
.tb.on { background: #c4dff3; border-color: #9ccaec; }
.tb.first { margin-left: 12px; }
.tb.gap1 { margin-left: 11px; }
.tb.gap2 { margin-left: 11px; }

.panes { height: 822px; display: flex; padding-left: 1px; }
.left { width: 264px; display: flex; flex-direction: column; padding-right: 2px; }
.right { flex: 1; display: flex; flex-direction: column; border-left: 2px solid #8c8c8c; padding-right: 2px; padding-bottom: 3px; }
.tabs { height: 20px; display: flex; align-items: flex-end; }
.tab { height: 18px; line-height: 19px; padding: 0 3px; border: 1px solid #dcdcdc; border-bottom: 0; border-left: 0; color: #222; flex: none; text-align: center; letter-spacing: -0.150px; }
.tab.sel { height: 20px; line-height: 21px; background: #fff; border: 0; }
.left .tab { width: 52px; }
.left .tab.sel { width: 54.500px; }
.right .tab { width: 35.500px; }
.right .tab:nth-child(1) { width: 54.500px; }
.right .tab:nth-child(2) { width: 50.500px; }
.right .tab:nth-child(3) { width: 54.500px; }
.tree { flex: 1; background: #fff; border-right: 1px solid #dcdcdc; padding-top: 2.500px; }
.ex { width: 8px; height: 8px; flex: none; }
.node { height: 15.860px; display: flex; align-items: center; padding-left: 5px; }
.node.in { padding-left: 22px; }
.node > :nth-child(2) { margin: 0 3.500px 0 4.500px; }
.node.in > :nth-child(2) { margin-left: 6px; }
.node.in > svg:nth-child(2) { margin-right: 3px; }
.node b { font-weight: 400; line-height: 16px; padding-top: .5px; }
.pick { background: #0078d7; color: #fff; width: 8px; padding-left: 2px; }
.filter { height: 31px; display: flex; align-items: flex-start; padding: 4px 0 0 7px; gap: 6px; border-bottom: 3px solid #fff; }
.filter span { line-height: 21px; }
.field { width: 217px; height: 19px; background: #fff; border: 1px solid #b0b0b0; }
.table { flex: 1; background: #fff; border-right: 1px solid #dcdcdc; border-bottom: 1px solid #dcdcdc; }
.thead { height: 25.500px; display: flex; border-bottom: 1px solid #e8e8e8; line-height: 29px; }
.thead span { width: 135px; padding-left: 5.500px; border-right: 1px solid #e0e0e0; }
.thead span + span { padding-left: 5px; border: 0; }
.r { height: 15.870px; display: grid; grid-template-columns: 18.500px 119.800px 1fr; align-items: center; line-height: 15px; }
.r.s { grid-template-columns: 35px 103.300px 1fr; }
.r span { grid-column: 2; grid-row: 1; padding-top: 1px; }
.r span + span { grid-column: 3; padding: 0 0 .5px; letter-spacing: -0.170px; }
.r.n span + span { letter-spacing: -0.350px; }
.r .ex { grid-column: 1; grid-row: 1; margin-left: 4px; }
.r.s .ex { margin-left: 20.700px; }
.r.g span:nth-of-type(1) { font-weight: 700; }

.status { height: 23px; display: flex; align-items: center; gap: 4px; padding: 1px 2px 0 5px; background: #cdcdcd; border-top: 2px solid #bcbcbc; font-size: 8.600px; letter-spacing: -0.150px; }
.status .msg { flex: 1; padding-top: 1px; }
.badge { height: 15px; line-height: 14px; width: 48px; text-align: center; border: 1px solid #999; outline: 1px solid #e0e0e0; font-size: 8.500px; letter-spacing: 0; }

.taskbar { display: flex; position: relative; background: #1d1d1d; }
.taskbar span { display: grid; place-items: center; flex: none; }
.taskbar .run { border-bottom: 2px solid transparent; background: linear-gradient(#76b9ed, #76b9ed) center bottom / 82% 2px no-repeat border-box; padding-top: 2px; }
.inner { height: 35px; background: linear-gradient(90deg, #1c1c1c 0 700px, #434343 765px, #484848 1200px, #38404c 1692px); }
.inner span { width: 43.170px; height: 35px; }
.inner .tv { margin-right: .5px; }
.inner svg { width: 21px; height: 21px; }
.faded svg { opacity: .5; }
.outer { width: 835px; }
.outer span { width: 49px; height: 40px; }
.outer span:first-child { width: 46px; }
.outer .tv { margin-right: 2px; }
.outer svg { width: 24px; height: 24px; }
.outer .active { background-color: #4b4b4b; }

/* throttle dialog */
.dialog { position: absolute; left: 959px; top: 101px; width: 462px; height: 526px; background: #f0f0f0; border: 1px solid #a6a6a6; box-shadow: 1px 3px 9px rgba(0, 0, 0, .28); }
.d-title { height: 27px; display: flex; align-items: center; padding: 0 9px; background: #fff; color: #999; gap: 6px; }
.d-title span { flex: 1; }
.d-body { padding: 13px 9px 0 9.700px; }
.chk { display: flex; align-items: center; height: 12px; gap: 3.500px; }
.chk.sub { margin: 12.500px 0 0 9.500px; }
.chk svg, .h-row svg { width: 12px; height: 12px; }
.hosts { margin-top: 15.500px; height: 88px; width: 441px; border: 1px solid #82878c; background: #fff; }
.h-row { display: grid; grid-template-columns: 25px 1fr; height: 14px; line-height: 14px; border-bottom: 1px solid #eee; }
.h-row.head { height: 24px; line-height: 27px; }
.h-row span + span { border-left: 1px solid #e4e4e4; padding-left: 3px; }
.h-row.head span + span { padding-left: 5px; }
.h-row svg { margin-left: 7px; }
.btns { display: flex; }
.btn { width: 65px; height: 19px; line-height: 17px; text-align: center; background: #e1e1e1; border: 1px solid #adadad; }
.btn.off { background: #ccc; border-color: #bfbfbf; color: #888; }
.btn.ok { border: 2px solid #1273c4; line-height: 15px; margin-left: 79px; }
.btn.wide { width: 79px; }
.add { padding: 0 0 0 152.300px; gap: 7px; margin-top: 7px; }
.rule { height: 1px; background: #b4b4b4; margin: 16px 0 17px; }
.form { display: grid; grid-template-columns: 183.300px 126px 125.700px; grid-template-rows: 19px 14px; grid-auto-rows: 18.700px; row-gap: 6px; }
.form label { line-height: 19px; }
.form .cap { line-height: 15px; }
.form .select { grid-column: 2 / 4; width: 257.700px; display: flex; justify-content: space-between; align-items: center; padding: 0 4px 0 2px; background: #e1e1e1; border: 1px solid #adadad; }
.inp { background: #fff; border: 1px solid #b0b0b5; padding-left: 2px; line-height: 17px; letter-spacing: -0.300px; }
.form > span + span { margin-left: 6px; margin-right: -6px; }
.pair { display: flex; gap: 6px; }
.pair .inp { width: 60px; }
.preset { padding-left: 145.300px; gap: 7px; margin-top: 6.500px; }
.foot { margin-top: 17px; gap: 7.500px; }

.tray { position: absolute; left: 1562px; top: 810px; width: 107px; height: 107px; display: grid; grid-template-columns: repeat(3, 35.500px); grid-auto-rows: 35.500px; place-items: center; background: #515151; border: 1px solid #999; border-bottom: 0; border-right: 0; box-shadow: 0 0 8px rgba(0, 0, 0, .3); padding-bottom: 1px; }
.tray svg { width: 15px; height: 15px; margin-top: -1.500px; }
.ink { position: absolute; left: 0; top: 0; }

.viewer-bottom { display: flex; align-items: center; padding-left: 11px; background: #272727; }
.vbar { width: 1px; height: 24px; background: #3e3e3e; margin-left: 13px; }
.zoomers { margin-left: auto; display: flex; align-items: center; padding-right: 13px; gap: 24px; }
.zoomers .vbar { margin-left: -9px; margin-right: -9px; }

.bottom { display: flex; overflow: hidden; }
.site { flex: 1; display: flex; align-items: flex-start; background: #fff; border-left: 5px solid #46556a; overflow: hidden; }
.catalog { margin: 23px 0 0 19.500px; font: 700 28px/36px "Open Sans", sans-serif; letter-spacing: -1.500px; color: #333; }
.help { margin: 27px 9px 0 auto; width: 181px; height: 30px; background: #1876ff; color: #fff; text-align: center; font: 700 14.500px/24px "Open Sans", sans-serif; letter-spacing: -.650px; }
.social { margin: 18px 4px 0 0; width: 147px; height: 40px; border: 1px solid #bbb; border-radius: 4px; color: #1b1b1b; text-align: center; font: 400 15.500px/41px "Open Sans", sans-serif; letter-spacing: -.700px; }

/* floating annotation toolbar */
.editor { position: absolute; left: 1123px; top: 967px; width: 682px; height: 99px; border-radius: 4px; box-shadow: 0 1px 4px rgba(0, 0, 0, .5); overflow: hidden; }
.e-top { height: 56px; display: flex; align-items: center; padding-top: 1px; background: linear-gradient(#fdfdfd, #dcdcdc 45%, #adadad); border-bottom: 1px solid #e6e6e6; }
.e-top > span { width: 59px; height: 30px; display: grid; place-items: center; border-left: 1px solid #f2f2f2; position: relative; flex: none; }
.e-top > .first { border: 0; width: 58px; }
.e-top > .cur { height: 42px; width: 57px; margin: 0 1px; background: linear-gradient(#3f4a52, #5a6369); border-radius: 7px; border: 0; box-shadow: 0 1px 0 #fff; }
.e-grip { width: 29.500px; height: 42px; padding: 1px 0 0 9.500px; }
.dots { display: block; width: 15px; height: 20px; margin-left: 1px; background: radial-gradient(circle, #b4b4b4 1px, transparent 1.500px) 0 0 / 5px 5px; }
.fold { display: grid; place-items: center; width: 15px; height: 15px; margin-top: 3px; border: 1px solid #999; border-radius: 2px; background: #eee; }
.glyph { font: 700 34px/30px "Liberation Sans", sans-serif; color: #4c585f; letter-spacing: 0; }
.glyph.blur { opacity: .85; transform: translateX(-2px) skewX(-8deg) scaleX(.9); }
.marquee { position: absolute; left: 27px; top: 1px; width: 18px; height: 28px; border: 1px dashed #555; }
.num { font: 700 14px "Open Sans", sans-serif; }
.e-bot { height: 43px; display: flex; align-items: center; padding: 0 0 2px 13px; background: linear-gradient(#252d35, #2d363f 30%, #394047); }
.redo { margin-left: 11px; }
.hue { position: relative; width: 338px; height: 7px; margin-left: 23px; border: 1px solid #1a1e22; background: linear-gradient(90deg, #fff 8px, #b80000 8px, #b8b800 60px, #00b800 115px, #00b8b8 170px, #0000b8 225px, #b800b8 275px, #b80000 330px, #000 330px); }
.knob { position: absolute; left: 106px; top: -6px; width: 17px; height: 17px; border-radius: 50%; border: 6px solid #20262a; background: #0b0; background-clip: padding-box; box-shadow: 0 0 0 1px #15191c, inset 0 0 0 0 #000; outline: 1px solid #6a7176; outline-offset: -2px; }
.size { position: relative; margin-left: 147px; }
.knob.w { left: -9px; top: -2px; background-color: #ddd; }
.done { position: absolute; left: 1819px; top: 967px; width: 77px; height: 57px; display: flex; border-radius: 3px; border: 1px solid #1c86b4; background: linear-gradient(#5bc8f5, #2fa0d0 55%, #1684b2); overflow: hidden; }
.done span { display: grid; place-items: center; }
.done .ok { width: 60px; }
.done .more { flex: 1; border-left: 1px solid #1c86b4; }
```
